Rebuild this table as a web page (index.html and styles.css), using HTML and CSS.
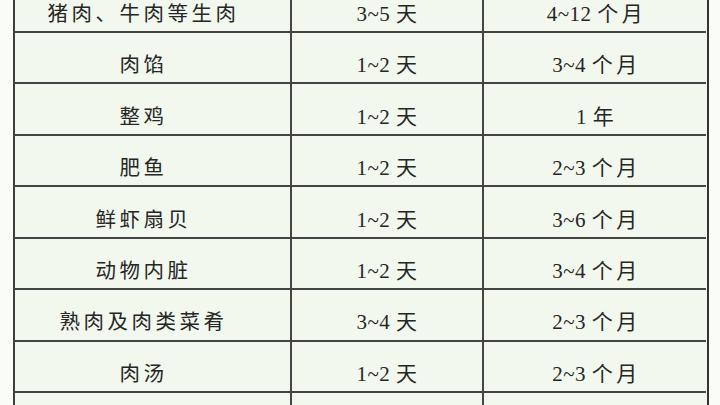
FILE: index.html
```html
<!DOCTYPE html>
<html lang="zh">
<head>
<meta charset="utf-8">
<link rel="stylesheet" href="styles.css">
</head>
<body>
<div class="page">
<table class="storage">
<tbody>
<tr><td class="food">猪肉、牛肉等生肉</td><td class="chill">3~5 天</td><td class="freeze">4~12 个<span class="unit">月</span></td></tr>
<tr><td class="food">肉馅</td><td class="chill">1~2 天</td><td class="freeze">3~4 个<span class="unit">月</span></td></tr>
<tr><td class="food">整鸡</td><td class="chill">1~2 天</td><td class="freeze">1 年</td></tr>
<tr><td class="food">肥鱼</td><td class="chill">1~2 天</td><td class="freeze">2~3 个<span class="unit">月</span></td></tr>
<tr><td class="food">鲜虾扇贝</td><td class="chill">1~2 天</td><td class="freeze">3~6 个<span class="unit">月</span></td></tr>
<tr><td class="food">动物内脏</td><td class="chill">1~2 天</td><td class="freeze">3~4 个<span class="unit">月</span></td></tr>
<tr><td class="food">熟肉及肉类菜肴</td><td class="chill">3~4 天</td><td class="freeze">2~3 个<span class="unit">月</span></td></tr>
<tr><td class="food">肉汤</td><td class="chill">1~2 天</td><td class="freeze">2~3 个<span class="unit">月</span></td></tr>
<tr><td class="food">&nbsp;</td><td class="chill">&nbsp;</td><td class="freeze">&nbsp;</td></tr>
</tbody>
</table>
</div>
</body>
</html>
```

FILE: styles.css
```css
html, body {
  margin: 0;
  padding: 0;
  background: #fafcf8;
  overflow: hidden;
}
.page {
  width: 720px;
  height: 405px;
  overflow: hidden;
  padding-left: 13px;
  box-sizing: border-box;
}
.storage {
  margin-top: -18.4px;
  border-collapse: separate;
  border-spacing: 0;
  background: #f2f8ee;
  border-left: 2px solid #404040;
  box-shadow: 1px 0 0 #f6faf3, 3px 0 0 #333333;
  font-family: "Liberation Serif", "Noto Sans CJK SC", serif;
  color: #262626;
  table-layout: fixed;
}
.storage td {
  height: 51.43px;
  box-sizing: border-box;
  border-bottom: 2px solid #444444;
  border-right: 2px solid #444444;
  text-align: center;
  vertical-align: middle;
  padding: 15px 0 0 0;
  font-size: 21px;
  line-height: 24px;
  white-space: nowrap;
}
.storage td.food {
  width: 277px;
  letter-spacing: 3.5px;
  padding-right: 18px;
  font-size: 20.5px;
}
.storage td.chill {
  width: 192px;
  letter-spacing: 0.5px;
}
.storage td.freeze {
  width: 222px;
  border-right: none;
  letter-spacing: 0.5px;
}
.unit {
  margin-left: 3px;
}
```
